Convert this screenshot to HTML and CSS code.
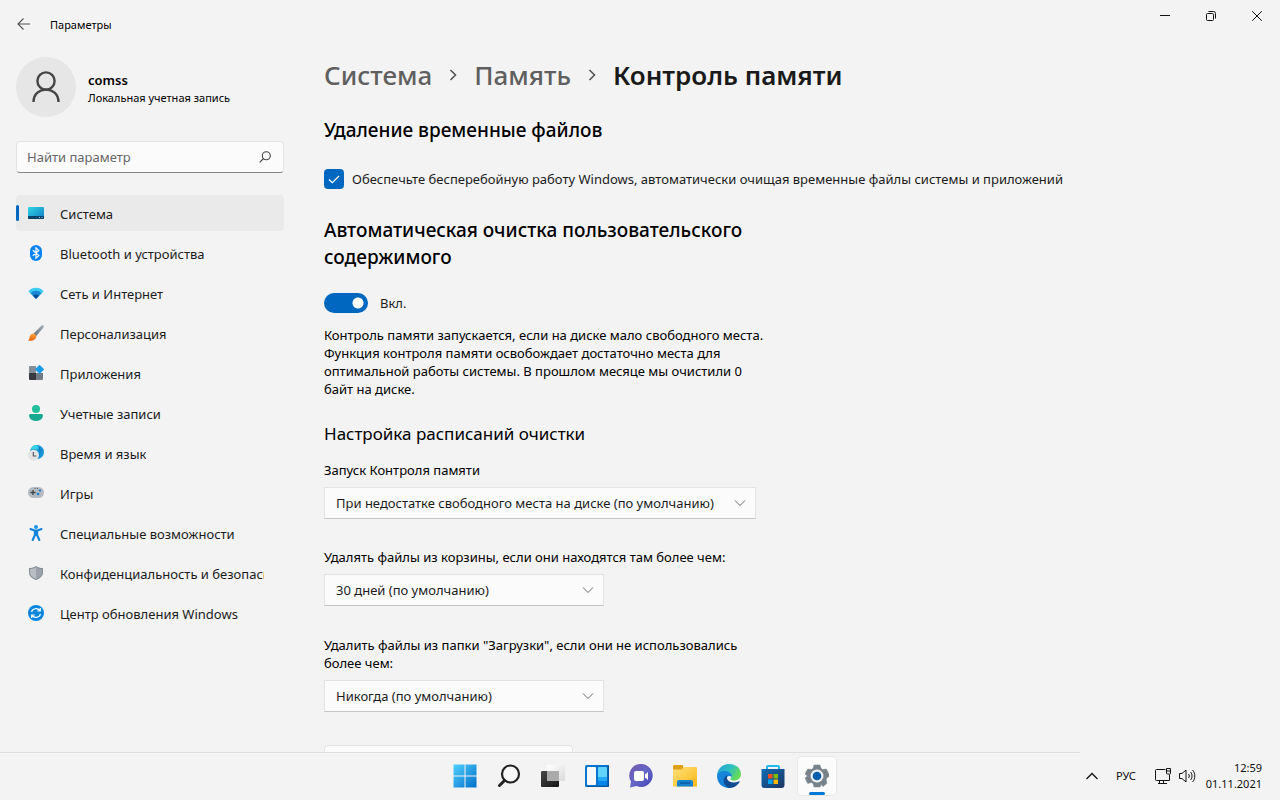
FILE: index.html
```html
<!DOCTYPE html>
<html lang="ru">
<head>
<meta charset="utf-8">
<meta name="viewport" content="width=device-width, initial-scale=1">
<title>Параметры</title>
<link rel="stylesheet" href="styles.css">
</head>
<body>
<div class="window">
  <header class="titlebar">
    <div class="titlebar-left">
      <button class="back" type="button" aria-label="Назад"><svg width="14" height="14" viewBox="0 0 14 14" fill="none" stroke="#555" stroke-width="1.1"><path d="M13 7H1M6.500 1.500 1 7l5.500 5.500"/></svg></button>
      <span class="app-name">Параметры</span>
    </div>
    <div class="caption-buttons">
      <button type="button" aria-label="Свернуть"><svg width="12" height="12" viewBox="0 0 12 12" stroke="#111"><path d="M1 5.500h10"/></svg></button>
      <button type="button" aria-label="Восстановить"><svg width="12" height="12" viewBox="0 0 12 12" fill="none" stroke="#111"><rect x="1.500" y="3.500" width="7" height="7" rx="1"/><path d="M3.500 1.500h5a2 2 0 0 1 2 2v5"/></svg></button>
      <button type="button" aria-label="Закрыть"><svg width="12" height="12" viewBox="0 0 12 12" stroke="#111"><path d="M1.200 1.200l9.600 9.600M10.800 1.200l-9.600 9.600"/></svg></button>
    </div>
  </header>

  <div class="panes">
    <aside class="sidebar">
      <div class="account">
        <div class="avatar"><svg width="28" height="32" viewBox="0 0 28 32" fill="none" stroke="#454545" stroke-width="2.400"><circle cx="14" cy="10" r="8.600"/><path d="M1.500 31C1.500 14.500 26.500 14.500 26.500 31"/></svg></div>
        <div class="account-text">
          <div class="account-name">comss</div>
          <div class="account-type">Локальная учетная запись</div>
        </div>
      </div>

      <div class="search">
        <input type="text" placeholder="Найти параметр" aria-label="Найти параметр">
        <svg width="12" height="12" viewBox="0 0 12 12" fill="none" stroke="#444" stroke-width="1.100"><circle cx="7.300" cy="4.700" r="4"/><path d="M4.500 7.500.7 11.300"/></svg>
      </div>

      <nav class="nav">
        <a class="nav-item current" href="#system">
          <svg width="16" height="16" viewBox="0 0 16 16"><defs><linearGradient id="sy" x1="0" y1="0" x2="1" y2="1"><stop stop-color="#33d6e6"/><stop offset="1" stop-color="#0f7cc4"/></linearGradient></defs><rect y="2" width="16" height="12" rx="1" fill="url(#sy)"/><path d="M0 11h16v2a1 1 0 0 1-1 1H1a1 1 0 0 1-1-1z" fill="#0a4468"/><path d="M11 12.500h1M13.500 12.500h1" stroke="#9cf"/></svg>
          <span>Система</span></a>
        <a class="nav-item" href="#bluetooth">
          <svg width="16" height="16" viewBox="0 0 16 16"><rect x="2" width="12" height="16" rx="6" fill="#0a84f5"/><path d="M4.800 5.200l6 5.400L8 13.200V2.800l2.800 2.600-6 5.400" fill="none" stroke="#fff" stroke-width="1.200"/></svg>
          <span>Bluetooth и устройства</span></a>
        <a class="nav-item" href="#network">
          <svg width="16" height="16" viewBox="0 0 16 16"><path d="M.3 6.200C4.500 1.600 11.500 1.600 15.700 6.200L8 13.800z" fill="#3ccbf4"/><path d="M2.400 8.300C5.500 5 10.500 5 13.600 8.300L8 13.800z" fill="#1888d5"/><path d="M4.900 10.800c1.800-1.700 4.400-1.700 6.200 0L8 13.900z" fill="#0b4b98"/></svg>
          <span>Сеть и Интернет</span></a>
        <a class="nav-item" href="#personalization">
          <svg width="16" height="16" viewBox="0 0 16 16"><defs><linearGradient id="br" x1="0" y1="1" x2="1" y2="0"><stop stop-color="#666e76"/><stop offset="1" stop-color="#a8b0b7"/></linearGradient><linearGradient id="bo" x1="0" y1="0" x2="0" y2="1"><stop stop-color="#ffad43"/><stop offset="1" stop-color="#e6600c"/></linearGradient></defs><path d="M5.600 8.400 13.600.6c1.400-1 2.800.4 1.900 1.800L8.300 11z" fill="url(#br)"/><path d="M5.600 8.200 8.300 10.700c.5 3.500-3.800 6-8.300 4.800 2-1 1-3.200 2.300-5.200.8-1.300 2-1.900 3.300-2.100z" fill="url(#bo)"/></svg>
          <span>Персонализация</span></a>
        <a class="nav-item" href="#apps">
          <svg width="16" height="16" viewBox="0 0 16 16"><path d="M1 2a1 1 0 0 1 1-1h6v7H1z" fill="#858e96"/><path d="M1 8h7v7H2a1 1 0 0 1-1-1z" fill="#373b40"/><path d="M8 8h7v6a1 1 0 0 1-1 1H8z" fill="#737b84"/><path d="M11.600-.2 15.800 4a.6.6 0 0 1 0 .8L11.600 9 7.300 4.800a.6.6 0 0 1 0-.8z" fill="#189ce8"/></svg>
          <span>Приложения</span></a>
        <a class="nav-item" href="#accounts">
          <svg width="16" height="16" viewBox="0 0 16 16"><circle cx="8" cy="4" r="4" fill="#21bf9c"/><path d="M3 9h10c2 0 2.300 1.200 1.700 3-1.500 5.200-11.900 5.200-13.400 0C.7 10.200 1 9 3 9z" fill="#18aa91"/></svg>
          <span>Учетные записи</span></a>
        <a class="nav-item" href="#time">
          <svg width="16" height="16" viewBox="0 0 16 16"><circle cx="9" cy="7" r="7" fill="#1595d8"/><path d="M3 3.500C5-1 10-1 11 1.500L9 7 3 6z" fill="#39d1ea"/><path d="M2.500 5h13M9 0c4 3 4 10 0 14" fill="none" stroke="#1175b6" stroke-width=".7"/><circle cx="5.500" cy="10.200" r="5.500" fill="#e2e3e4"/><path d="M5.300 7v4h3" fill="none" stroke="#4d5257" stroke-width="1.100"/></svg>
          <span>Время и язык</span></a>
        <a class="nav-item" href="#games">
          <svg width="16" height="16" viewBox="0 0 16 16"><rect y="2" width="16" height="11" rx="5.500" fill="#b4bac1"/><path d="M2.500 7.500h5M5 5v5" stroke="#41464b" stroke-width="1.300"/><circle cx="12" cy="5.500" r="1.100" fill="#1670be"/><circle cx="10" cy="9" r="1.300" fill="#1680cf"/><circle cx="7" cy="3.500" r=".6" fill="#555"/><circle cx="9.500" cy="3.500" r=".6" fill="#555"/></svg>
          <span>Игры</span></a>
        <a class="nav-item" href="#accessibility">
          <svg width="16" height="16" viewBox="0 0 16 16"><circle cx="8" cy="2" r="2" fill="#1b95e4"/><path d="M2.500 4 6.500 5.500h3L13.500 4M6.900 6v4L4.700 15M9.100 6v4l2.200 5" fill="none" stroke="#0f85da" stroke-width="2.100" stroke-linecap="round"/><path d="M6 5h4v5.500H6z" fill="#0f85da"/></svg>
          <span>Специальные возможности</span></a>
        <a class="nav-item" href="#privacy">
          <svg width="16" height="16" viewBox="0 0 16 16"><path d="M8 1c2 1.400 4.400 2 7 2v4.500c0 3.500-3 6.200-7 7.500-4-1.300-7-4-7-7.500V3c2.600 0 5-.6 7-2z" fill="#858d95"/><path d="M8 2.200c1.900 1.200 3.900 1.700 6 1.800v3.500c0 3-2.500 5.200-6 6.400z" fill="#9ba2a9"/><path d="M8 2.200C6.100 3.400 4.100 3.900 2 4v3.500c0 3 2.500 5.200 6 6.400z" fill="#b8bdc2"/></svg>
          <span>Конфиденциальность и безопасность</span></a>
        <a class="nav-item" href="#update">
          <svg width="16" height="16" viewBox="0 0 16 16"><circle cx="8" cy="8" r="8" fill="#0c86dc"/><path d="M3.600 7C4.200 3.300 9.500 2.500 12 5.500M12.400 9c-.6 3.700-5.900 4.500-8.400 1.500M12.300 3v3H9.300M3.700 13v-3h3" fill="none" stroke="#fff" stroke-width="1.200"/></svg>
          <span>Центр обновления Windows</span></a>
      </nav>
    </aside>

    <main class="content">
      <h1 class="breadcrumb">
        <a href="#system">Система</a>
        <svg width="8" height="12" viewBox="0 0 8 12" fill="none" stroke="#555" stroke-width="1.600"><path d="M1.500 1 6.500 6l-5 5"/></svg>
        <a href="#storage">Память</a>
        <svg width="8" height="12" viewBox="0 0 8 12" fill="none" stroke="#555" stroke-width="1.600"><path d="M1.500 1 6.500 6l-5 5"/></svg>
        <span>Контроль памяти</span>
      </h1>

      <h2>Удаление временные файлов</h2>
      <label class="check">
        <span class="check-box"><input type="checkbox" checked><svg width="20" height="20" viewBox="0 0 20 20" fill="none" stroke="#fff" stroke-width="1.200"><path d="M5 10.500 8.300 13.700 15 7"/></svg></span>
        <span>Обеспечьте бесперебойную работу Windows, автоматически очищая временные файлы системы и приложений</span>
      </label>

      <h2 class="measure">Автоматическая очистка пользовательского содержимого</h2>
      <label class="toggle">
        <input type="checkbox" role="switch" checked>
        <span>Вкл.</span>
      </label>
      <p class="measure">Контроль памяти запускается, если на диске мало свободного места. Функция контроля памяти освобождает достаточно места для оптимальной работы системы. В прошлом месяце мы очистили 0 байт на диске.</p>

      <h3>Настройка расписаний очистки</h3>
      <div class="field field-wide">
        <label for="run">Запуск Контроля памяти</label>
        <div class="select">
          <select id="run"><option>При недостатке свободного места на диске (по умолчанию)</option></select>
          <svg width="12" height="8" viewBox="0 0 12 8" fill="none" stroke="#666"><path d="M1 1.500l5 5 5-5"/></svg>
        </div>
      </div>
      <div class="field">
        <label for="bin">Удалять файлы из корзины, если они находятся там более чем:</label>
        <div class="select">
          <select id="bin"><option>30 дней (по умолчанию)</option></select>
          <svg width="12" height="8" viewBox="0 0 12 8" fill="none" stroke="#666"><path d="M1 1.500l5 5 5-5"/></svg>
        </div>
      </div>
      <div class="field">
        <label for="downloads">Удалить файлы из папки "Загрузки", если они не использовались более чем:</label>
        <div class="select">
          <select id="downloads"><option>Никогда (по умолчанию)</option></select>
          <svg width="12" height="8" viewBox="0 0 12 8" fill="none" stroke="#666"><path d="M1 1.500l5 5 5-5"/></svg>
        </div>
      </div>
      <button class="run-now" type="button" aria-label="Запустить контроль памяти"></button>
    </main>
  </div>
</div>

<footer class="taskbar">
  <div class="apps">
    <button type="button" aria-label="Пуск"><svg width="24" height="24" viewBox="0 0 24 24"><defs><linearGradient id="st" gradientUnits="userSpaceOnUse" x1="0" y1="0" x2="24" y2="24"><stop stop-color="#51d3ff"/><stop offset="1" stop-color="#006cc9"/></linearGradient></defs><path d="M.5.5h11v11H.5zM12.500.5h11v11h-11zM.5 12.500h11v11H.5zM12.500 12.500h11v11h-11z" fill="url(#st)"/></svg></button>
    <button type="button" aria-label="Поиск"><svg width="24" height="24" viewBox="0 0 24 24" fill="none" stroke="#222"><circle cx="13.500" cy="10" r="8.500" fill="#f7f7f7" stroke-width="2.200"/><path d="M7.500 16.500 2.500 21.500" stroke-width="3" stroke-linecap="round"/></svg></button>
    <button type="button" aria-label="Представление задач"><svg width="24" height="24" viewBox="0 0 24 24"><defs><linearGradient id="tv" x1="0" y1="0" x2="1" y2="1"><stop stop-color="#484848"/><stop offset="1" stop-color="#151515"/></linearGradient><linearGradient id="tl" x1="0" y1="0" x2="1" y2="1"><stop stop-color="#fff"/><stop offset="1" stop-color="#dadada"/></linearGradient></defs><rect y="7" width="18" height="16" rx="1" fill="url(#tv)"/><rect x="6" y="1" width="18" height="16" rx="1" fill="url(#tl)"/><path d="M6 7h12v10H7a1 1 0 0 1-1-1z" fill="#aaa"/></svg></button>
    <button type="button" aria-label="Мини-приложения"><svg width="24" height="24" viewBox="0 0 24 24"><rect y="1" width="24" height="22" rx="1.500" fill="#0876ce"/><path d="M22.500 1H23a1 1 0 0 1 1 1v20a1 1 0 0 1-1 1H1l1-1h20.500z" fill="#0754a0"/><rect x="2" y="3" width="9" height="18" rx="1" fill="#f8f8f8"/><path d="M14 3h7a1 1 0 0 1 1 1v9h-9V4a1 1 0 0 1 1-1z" fill="#62d4fc"/><path d="M13 13h9v4h-9z" fill="#25a9f7"/><path d="M13 17h9v3a1 1 0 0 1-1 1h-7a1 1 0 0 1-1-1z" fill="#0786e8"/></svg></button>
    <button type="button" aria-label="Чат"><svg width="24" height="24" viewBox="0 0 24 24"><defs><linearGradient id="ch" x1="0" y1="0" x2="1" y2="1"><stop stop-color="#765aaa"/><stop offset=".5" stop-color="#6366c7"/><stop offset="1" stop-color="#4743b5"/></linearGradient></defs><path d="M12.500 0a11.500 11.500 0 1 1-5 22L1 23.500l1-6A11.500 11.500 0 0 1 12.500 0z" fill="url(#ch)"/><rect x="5" y="7" width="10" height="10" rx="2" fill="#fff"/><path d="M16 10.500 19 8v8l-3-2.500z" fill="#fff"/></svg></button>
    <button type="button" aria-label="Проводник"><svg width="24" height="24" viewBox="0 0 24 24"><defs><linearGradient id="fo" x1="0" y1="0" x2="1" y2="1"><stop stop-color="#ffe179"/><stop offset="1" stop-color="#f8b719"/></linearGradient></defs><path d="M0 2.500A1.500 1.500 0 0 1 1.500 1H9a1.500 1.500 0 0 1 1 2.500V8H0z" fill="#dba016"/><path d="M0 5.500h8.500L11 3h12a1 1 0 0 1 1 1v18.500H0z" fill="url(#fo)"/><path d="M4 22.500V18a2 2 0 0 1 2-2h12a2 2 0 0 1 2 2v4.500z" fill="#1583cf"/><path d="M7 19h10" stroke="#0a5b9d" stroke-width="1.500"/></svg></button>
    <button type="button" aria-label="Microsoft Edge"><svg width="24" height="24" viewBox="0 0 24 24"><defs><linearGradient id="ed" x1="0" y1="0" x2="1" y2=".5"><stop stop-color="#229ed8"/><stop offset=".55" stop-color="#2ebfc1"/><stop offset="1" stop-color="#66dc55"/></linearGradient></defs><path d="M0 12C0 5 5.200 0 12 0s12 4.300 12 10c0 4-3 6.500-7 6.500-3.200 0-4.500-1-3-2.500 1.800-2.600-.4-6-4.500-6C5 8 1.500 9.500 0 12z" fill="url(#ed)"/><path d="M0 12C.8 8.500 4.500 6.800 8 7c4.500.2 7.600 3 6.800 6-3-2.500-6 .2-5.500 3.500.4 3.500 3.500 6 8 5.500-2 1.300-3.500 2-5.500 2C5.200 24 0 19 0 12z" fill="#1685d9"/><path d="M10.500 11C5 13.500 5.500 21 11.500 23.900c5.500.3 9-2.400 11-5.900.3-.7-.3-1-1-.6-4.500 2.300-10.500 1-11.500-2.900-.2-1.300 0-2.300.5-3.500z" fill="#104c92"/></svg></button>
    <button type="button" aria-label="Microsoft Store"><svg width="24" height="24" viewBox="0 0 24 24"><defs><linearGradient id="so" x1="0" y1="0" x2="1" y2="1"><stop stop-color="#126db5"/><stop offset="1" stop-color="#1b3560"/></linearGradient></defs><path d="M6 6V3a1 1 0 0 1 1-1h10a1 1 0 0 1 1 1v3" fill="none" stroke="#23b9ee" stroke-width="2"/><path d="M.5 5h23v16a3 3 0 0 1-3 3h-17a3 3 0 0 1-3-3z" fill="url(#so)"/><path d="M7 10h4.500v4.500H7z" fill="#f25022"/><path d="M12.500 10H17v4.500h-4.500z" fill="#7fba00"/><path d="M7 15.500h4.500V20H7z" fill="#00a4ef"/><path d="M12.500 15.500H17V20h-4.500z" fill="#ffb900"/></svg></button>
    <button class="active" type="button" aria-label="Параметры"><svg width="24" height="24" viewBox="0 0 24 24"><path d="M9 1h6l1 3.500 1.800 1L21.300 5 24 10.500v2L21.700 14l-.4 1.500L21.800 19.500 18 22.500 16 20.500 15 23H9l-1-3.500-1.800-1L2.700 19.500 0 14l2.500-2L0 10 2.700 5l3.500.5 1.800-1z" fill="#78828a" stroke="#78828a" stroke-linejoin="round" stroke-width=".5"/><circle cx="12" cy="12" r="6.500" fill="#edf0f2"/><circle cx="12" cy="12" r="4.300" fill="#075fac"/></svg></button>
  </div>
  <div class="tray">
    <button type="button" aria-label="Скрытые значки"><svg width="12" height="8" viewBox="0 0 12 8" fill="none" stroke="#111" stroke-width="1.300"><path d="M.5 7 6 1.500 11.500 7"/></svg></button>
    <button class="lang" type="button">РУС</button>
    <button class="status" type="button" aria-label="Сеть и звук">
      <svg width="16" height="16" viewBox="0 0 16 16" fill="none" stroke="#111"><path d="M10.500 1.500h-9a1 1 0 0 0-1 1v9a1 1 0 0 0 1 1h13V6.500M4.500 12.500v3M8.500 12.500v3M3 15.500h9M11.500.5h4v4.500a1 1 0 0 1-1 1h-2a1 1 0 0 1-1-1zM11.500 3h4"/></svg>
      <svg width="17" height="14" viewBox="0 0 17 14" fill="none" stroke="#111"><path d="M.5 4.500H3L7 1v12L3 9.500H.5zM9.500 5c1 1 1 3 0 4M11.500 3c2 2 2 6 0 8M13.500 1c3 3 3 9 0 12"/></svg>
    </button>
    <div class="clock"><div>12:59</div><div>01.11.2021</div></div>
  </div>
</footer>
</body>
</html>
```

FILE: styles.css
```css
* { box-sizing: border-box; }

body {
  margin: 0;
  height: 100vh;
  display: flex;
  flex-direction: column;
  background: #f3f3f3;
  color: #000;
  font: 13px/18px "Noto Sans", "Open Sans", sans-serif;
  overflow: hidden;
}

button, input, select { font: inherit; color: inherit; }
button { border: 0; padding: 0; background: none; }
svg { display: block; flex: none; }
a { color: inherit; text-decoration: none; }

.window {
  flex: 1;
  min-height: 0;
  display: flex;
  flex-direction: column;
}

/* Title bar */
.titlebar {
  flex: none;
  height: 48px;
  display: flex;
  justify-content: space-between;
}
.titlebar-left { display: flex; align-items: center; }
.back { width: 48px; height: 48px; display: grid; place-items: center; }
.app-name { font-size: 11px; padding: 2px 0 0 2px; }
.caption-buttons { display: flex; }
.caption-buttons button { width: 46px; height: 32px; display: grid; place-items: center; }

.panes { flex: 1; min-height: 0; display: flex; }

/* Sidebar */
.sidebar { flex: none; width: 300px; padding: 9px 16px 0; }
.account { display: flex; align-items: center; gap: 12px; }
.avatar {
  width: 60px;
  height: 60px;
  border-radius: 50%;
  background: #e6e6e6;
  display: grid;
  place-items: center;
}
.account-text { padding-top: 3px; }
.account-name { font-weight: 600; }
.account-type { font-size: 11px; }

.search {
  margin-top: 24px;
  height: 32px;
  display: flex;
  align-items: center;
  padding-right: 12px;
  border: 1px solid #e3e3e3;
  border-bottom-color: #868686;
  border-radius: 4px;
  background: #fbfbfb;
}
.search input {
  flex: 1;
  min-width: 0;
  border: 0;
  padding: 0 10px;
  background: none;
  outline: 0;
}
.search input::placeholder { color: #666; opacity: 1; }

.nav { margin-top: 22px; display: flex; flex-direction: column; gap: 4px; }
.nav-item {
  height: 36px;
  display: flex;
  align-items: center;
  gap: 16px;
  padding: 0 20px 0 12px;
  border-radius: 4px;
  color: #1b1b1b;
}
.nav-item span { padding-top: 2px; overflow: hidden; white-space: nowrap; }
.nav-item.current { background: #eaeaea; padding-left: 0; gap: 0; }
.nav-item.current::before {
  content: "";
  width: 3px;
  height: 16px;
  margin-right: 9px;
  border-radius: 2px;
  background: #0067c0;
}
.nav-item.current span { margin-left: 16px; }

/* Page */
.content { flex: 1; min-width: 0; padding: 9px 24px 0; overflow: hidden; }
.measure { max-width: 448px; }

.breadcrumb {
  margin: 0;
  display: flex;
  align-items: center;
  gap: 17px;
  font-size: 26px;
  line-height: 36px;
  font-weight: 600;
  color: #1a1a1a;
}
.breadcrumb a { color: #5f5f5f; font-weight: 500; }

h2 { margin: 24px 0 25px; font-size: 19px; line-height: 27px; font-weight: 500; }
h3 { margin: 24px 0 15px; font-size: 17px; line-height: 24px; font-weight: 400; }
p { margin: 13px 0 0; }

.check { display: flex; align-items: center; gap: 8px; color: #1b1b1b; }
.check-box { display: grid; }
.check-box > * { grid-area: 1 / 1; }
.check-box input {
  appearance: none;
  width: 20px;
  height: 20px;
  margin: 0;
  border-radius: 4px;
  background: #0067c0;
}
.check-box svg { pointer-events: none; visibility: hidden; }
.check-box input:checked + svg { visibility: visible; }
.check + h2 { margin: 28px 0 22px; }

.toggle { display: flex; align-items: center; gap: 12px; color: #1b1b1b; }
.toggle input {
  appearance: none;
  width: 44px;
  height: 20px;
  margin: 0;
  border-radius: 10px;
  background: radial-gradient(circle at 34px 10px, #fff 5px, #0067c0 6px);
}

.field { width: 280px; margin-bottom: 30px; }
.field-wide { width: 432px; margin-bottom: 29px; }
.field label { display: block; width: 448px; margin-bottom: 8px; }
.select { display: grid; align-items: center; }
.select > * { grid-area: 1 / 1; }
.select svg { justify-self: end; margin-right: 10px; pointer-events: none; }
.select select {
  appearance: none;
  width: 100%;
  height: 32px;
  padding: 0 28px 0 11px;
  border: 1px solid #e3e3e3;
  border-bottom-color: #c4c4c4;
  border-radius: 1px;
  background: #fbfbfb;
  color: #1b1b1b;
}

.run-now {
  display: block;
  width: 249px;
  height: 32px;
  margin-top: 33px;
  border: 1px solid #e3e3e3;
  border-radius: 4px;
  background: #fbfbfb;
}

/* Taskbar */
.taskbar {
  flex: none;
  height: 48px;
  display: grid;
  grid-template-columns: 1fr auto 1fr;
  align-items: center;
  background: linear-gradient(#dfdfdf, #dfdfdf) 0 0 / calc(100% - 200px) 1px no-repeat #f3f3f3;
}
.apps { grid-column: 2; display: flex; gap: 6px; padding-left: 2px; }
.apps button {
  width: 38px;
  height: 38px;
  display: grid;
  place-items: center;
  border-radius: 4px;
}
.apps .active {
  position: relative;
  background: #fbfbfb;
  box-shadow: 0 0 0 1px #e9e9e9;
}
.apps .active::after {
  content: "";
  position: absolute;
  bottom: 0;
  left: 11px;
  width: 16px;
  height: 3px;
  border-radius: 2px;
  background: #0078d4;
}
.tray {
  display: flex;
  align-items: center;
  justify-content: flex-end;
  padding-right: 18px;
  font-size: 11px;
  line-height: 16px;
  color: #111;
}
.lang { margin: 0 19px 0 18px; }
.status { display: flex; align-items: center; gap: 8px; margin-right: 10px; }
.clock { text-align: right; }
```
